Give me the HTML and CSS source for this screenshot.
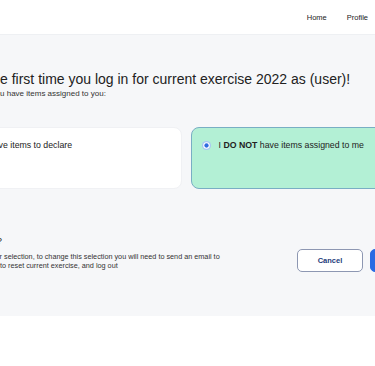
FILE: index.html
```html
<!DOCTYPE html>
<html lang="en">
<head>
  <meta charset="UTF-8">
  <meta name="viewport" content="width=device-width, initial-scale=1.0">
  <title>Declaration</title>
  <link rel="stylesheet" href="styles.css">
</head>
<body>
  <header class="topbar">
    <nav class="topnav">
      <a href="#">Home</a>
      <a href="#">Profile</a>
    </nav>
  </header>

  <main class="page">
    <div class="content">
      <div class="intro">
        <h1>This is the first time you log in for current exercise 2022 as (user)!</h1>
        <p>Please say if you have items assigned to you:</p>
      </div>

      <!-- Declaration choices -->
      <div class="choices">
        <label class="choice">
          <svg class="radio" viewBox="0 0 10 10" width="9" height="9">
            <circle cx="5" cy="5" r="4.4" fill="#fff" stroke="#8a8f99" stroke-width="0.9"/>
          </svg>
          <span>I have items to declare</span>
        </label>
        <label class="choice selected">
          <svg class="radio" viewBox="0 0 10 10" width="9" height="9">
            <circle cx="5" cy="5" r="5" fill="#a8c6f3"/>
            <circle cx="5" cy="5" r="3.6" fill="#fff"/>
            <circle cx="5" cy="5" r="2.4" fill="#2f6be0"/>
          </svg>
          <span>I <b>DO NOT</b> have items assigned to me</span>
        </label>
      </div>

      <div class="confirm">
        <div class="confirm-text">
          <h2>Are you sure?</h2>
          <p>When saving your selection, to change this selection you will need to send an email to<br>the administrator to reset current exercise, and log out</p>
        </div>
        <div class="actions">
          <button class="btn btn-outline">Cancel</button>
          <button class="btn btn-primary">Confirm</button>
        </div>
      </div>
    </div>
  </main>
</body>
</html>
```

FILE: styles.css
```css
/* Declaration page */
body {
  font-family: "Liberation Sans", Arial, sans-serif;
  margin: 0;
  background-color: white;
  color: #222;
  overflow: hidden;
}
.topbar {
  height: 34px;
  background-color: white;
  border-bottom: 1px solid #eef0f3;
  display: flex;
  justify-content: flex-end;
  align-items: center;
  padding-right: 7px;
}
.topnav {
  display: flex;
  gap: 20px;
}
.topnav a {
  color: #222;
  text-decoration: none;
  font-size: 7.5px;
}
.page {
  background-color: #f6f7f9;
  padding: 36px 0 44px;
}
.content {
  margin-left: -56px;
  width: 472px;
}
.intro h1 {
  font-size: 14px;
  font-weight: normal;
  line-height: 16px;
  margin: 0 0 2px;
  white-space: nowrap;
}
.intro p {
  font-size: 8px;
  line-height: 10px;
  margin: 0;
  color: #333;
}
.choices {
  display: grid;
  grid-template-columns: 1fr 1fr;
  gap: 9px;
  margin-top: 28px;
  padding-left: 12px;
}
.choice {
  height: 62px;
  box-sizing: border-box;
  background-color: white;
  border: 1px solid #f0f1f4;
  border-radius: 8px;
  padding: 12px 10px;
  display: flex;
  align-items: flex-start;
  gap: 8px;
  font-size: 8.75px;
  line-height: 11px;
}
.choice .radio {
  flex-shrink: 0;
  margin-top: 1px;
}
.choice.selected {
  background-color: #b3f0d5;
  border-color: #79aec4;
}
.confirm {
  display: flex;
  justify-content: space-between;
  align-items: flex-start;
  margin-top: 46px;
}
.confirm-text h2 {
  font-size: 9.3px;
  font-weight: normal;
  line-height: 12px;
  margin: 0 0 5px;
}
.confirm-text p {
  font-size: 7.25px;
  line-height: 9px;
  margin: 0;
  color: #333;
}
.actions {
  display: flex;
  gap: 7px;
  margin-top: 14px;
}
.btn {
  height: 23px;
  border-radius: 5px;
  font-family: inherit;
  font-size: 7.5px;
  font-weight: bold;
  cursor: pointer;
}
.btn-outline {
  width: 66px;
  background-color: white;
  border: 1px solid #8d97b2;
  color: #23397a;
}
.btn-primary {
  width: 46px;
  background-color: #2a6be3;
  border: 1px solid #2a6be3;
  color: white;
}
```
